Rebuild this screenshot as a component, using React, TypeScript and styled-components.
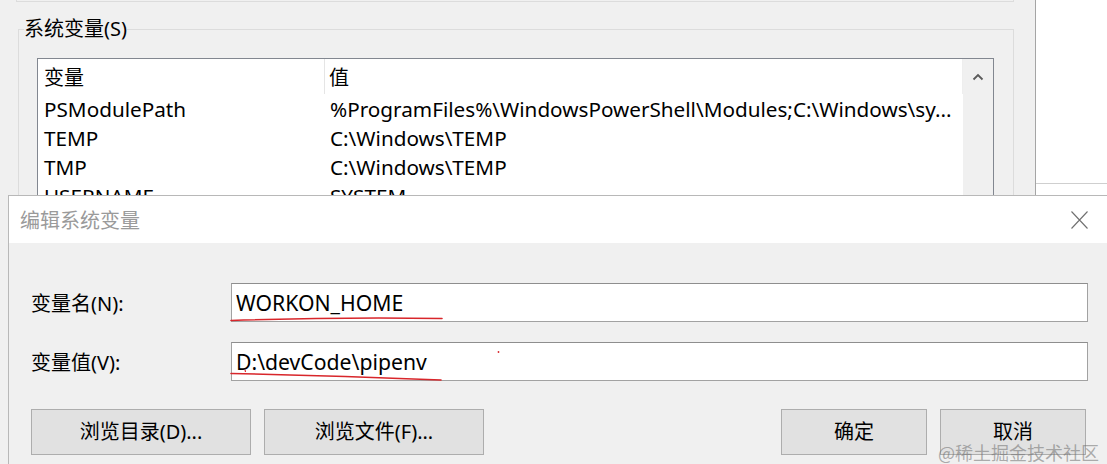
import React from "react";
import styled, { createGlobalStyle } from "styled-components";

const Global = createGlobalStyle`
  html, body { margin: 0; padding: 0; background: #f0f0f0; }
  body { font-family: "Noto Sans", "Noto Sans CJK SC", sans-serif; }
`;

const Page = styled.div`
  position: relative;
  width: 1107px;
  height: 464px;
  overflow: hidden;
  font-family: "Noto Sans", "Noto Sans CJK SC", sans-serif;
  font-size: 20px;
  color: #000;
`;

const Desktop = styled.div`
  display: flex;
  height: 100%;
`;

const BackWindow = styled.div`
  width: 1036px;
  flex: none;
  box-sizing: border-box;
  background: #f0f0f0;
  border-right: 1px solid #a5a5a5;
`;

const SideWindow = styled.div`
  flex: 1;
  background: #fff;
`;

const SideLine = styled.div`
  margin-top: 183px;
  border-top: 1px solid #cfcfcf;
`;

const PrevGroupTail = styled.div`
  margin-left: 16px;
  width: 998px;
  height: 2px;
  box-sizing: border-box;
  border: 1px solid #dcdcdc;
  border-top: none;
`;

const GroupBox = styled.fieldset`
  margin: 16px 0 0 18px;
  width: 996px;
  min-width: 0;
  box-sizing: border-box;
  border: 1px solid #dcdcdc;
  padding: 18px 0 0 5px;
`;

const Legend = styled.legend`
  padding: 0;
  font-size: 20px;
  line-height: 22px;
  color: #000;
`;

const ListBox = styled.div`
  margin-left: 13px;
  width: 957px;
  height: 200px;
  box-sizing: border-box;
  border: 1px solid #828790;
  background: #fff;
  display: flex;
`;

const ListBody = styled.div`
  flex: 1;
  min-width: 0;
  display: flex;
  flex-direction: column;
`;

const Row = styled.div<{ $header?: boolean }>`
  display: grid;
  grid-template-columns: 286px 1fr;
  height: ${(p) => (p.$header ? "35px" : "29px")};
  align-items: center;
  white-space: nowrap;
  font-size: ${(p) => (p.$header ? "20px" : "20.7px")};
`;

const NameCell = styled.div`
  padding-left: 6px;
  overflow: hidden;
`;

const ValueCell = styled.div<{ $header?: boolean }>`
  height: 100%;
  display: flex;
  align-items: center;
  box-sizing: border-box;
  padding-left: ${(p) => (p.$header ? "4px" : "5px")};
  border-left: 1px solid ${(p) => (p.$header ? "#e5e5e5" : "transparent")};
  border-right: 1px solid ${(p) => (p.$header ? "#eeeeee" : "transparent")};
  overflow: hidden;
`;

const ScrollBar = styled.div`
  width: 30px;
  flex: none;
  background: #f0f0f0;
  display: flex;
  justify-content: center;
  padding-top: 14px;
  box-sizing: border-box;
`;

const Dialog = styled.div`
  position: absolute;
  left: 8px;
  top: 195px;
  width: 1100px;
  bottom: -20px;
  box-sizing: border-box;
  border: 1px solid #b8b8b8;
  background: #f0f0f0;
  display: flex;
  flex-direction: column;
`;

const TitleBar = styled.div`
  height: 47px;
  flex: none;
  background: #fff;
  display: flex;
  align-items: center;
  justify-content: space-between;
  padding: 0 19px 0 11px;
  color: #9a9a9a;
  font-size: 20px;
`;

const Body = styled.div`
  padding: 40px 19px 0 22px;
  display: flex;
  flex-direction: column;
`;

const Form = styled.div`
  display: grid;
  grid-template-columns: 200px 1fr;
  row-gap: 20px;
  align-items: center;
`;

const Label = styled.div`
  font-size: 20px;
`;

const Field = styled.input`
  height: 39px;
  box-sizing: border-box;
  border: 1px solid #a2a2a2;
  border-top-color: #8e8e8e;
  background: #fff;
  padding: 0 4px;
  margin: 0;
  font: inherit;
  font-size: 21.2px;
  color: #000;
  outline: none;
`;

const ButtonRow = styled.div`
  margin-top: 28px;
  display: flex;
  justify-content: space-between;
  padding-right: 2px;
`;

const ButtonGroup = styled.div`
  display: flex;
  gap: 13px;
`;

const Button = styled.button<{ $w: number }>`
  width: ${(p) => p.$w}px;
  height: 46px;
  box-sizing: border-box;
  border: 1px solid #adadad;
  background: #e1e1e1;
  font: inherit;
  font-size: 20px;
  color: #000;
  padding: 0 0 3px;
`;

const Overlay = styled.svg`
  position: absolute;
  left: 0;
  top: 0;
  pointer-events: none;
`;

const Watermark = styled.div`
  position: absolute;
  right: 8px;
  bottom: 2px;
  font-family: "Noto Sans CJK SC", sans-serif;
  font-size: 18px;
  line-height: 20px;
  color: rgba(110, 110, 110, 0.55);
  white-space: nowrap;
`;

const rows = [
  ["PSModulePath", "%ProgramFiles%\\WindowsPowerShell\\Modules;C:\\Windows\\sy..."],
  ["TEMP", "C:\\Windows\\TEMP"],
  ["TMP", "C:\\Windows\\TEMP"],
  ["USERNAME", "SYSTEM"],
];

export default function App() {
  return (
    <Page>
      <Global />
      <Desktop>
        <BackWindow>
          <PrevGroupTail />
          <GroupBox>
            <Legend>系统变量(S)</Legend>
            <ListBox>
              <ListBody>
                <Row $header>
                  <NameCell>变量</NameCell>
                  <ValueCell $header>值</ValueCell>
                </Row>
                {rows.map(([n, v]) => (
                  <Row key={n}>
                    <NameCell>{n}</NameCell>
                    <ValueCell>{v}</ValueCell>
                  </Row>
                ))}
              </ListBody>
              <ScrollBar>
                <svg width="12" height="8" viewBox="0 0 12 8">
                  <path d="M1.5 6.5 L6 2 L10.5 6.5" fill="none" stroke="#5a5a5a" strokeWidth="1.8" />
                </svg>
              </ScrollBar>
            </ListBox>
          </GroupBox>
        </BackWindow>
        <SideWindow>
          <SideLine />
        </SideWindow>
      </Desktop>

      <Dialog>
        <TitleBar>
          <span>编辑系统变量</span>
          <svg width="17" height="18" viewBox="0 0 17 18">
            <path d="M0.5 0.5 L16.5 17.5 M16.5 0.5 L0.5 17.5" stroke="#707070" strokeWidth="1.1" fill="none" />
          </svg>
        </TitleBar>
        <Body>
          <Form>
            <Label>变量名(N):</Label>
            <Field readOnly value="WORKON_HOME" />
            <Label>变量值(V):</Label>
            <Field readOnly value="D:\devCode\pipenv" />
          </Form>
          <ButtonRow>
            <ButtonGroup>
              <Button $w={220}>浏览目录(D)...</Button>
              <Button $w={220}>浏览文件(F)...</Button>
            </ButtonGroup>
            <ButtonGroup>
              <Button $w={146}>确定</Button>
              <Button $w={146}>取消</Button>
            </ButtonGroup>
          </ButtonRow>
        </Body>
      </Dialog>

      <Overlay width="1107" height="464" viewBox="0 0 1107 464">
        <path d="M231 320.5 Q336 317 442 318.5" stroke="#d8262b" strokeWidth="1.6" fill="none" strokeLinecap="round" />
        <path d="M231 373.5 Q330 375.5 441 380" stroke="#d8262b" strokeWidth="1.6" fill="none" strokeLinecap="round" />
        <path d="M245 369.5 L245.5 372" stroke="#d8262b" strokeWidth="1.2" fill="none" />
        <circle cx="498.5" cy="352" r="0.9" fill="#d8262b" />
      </Overlay>
      <Watermark>@稀土掘金技术社区</Watermark>
    </Page>
  );
}
